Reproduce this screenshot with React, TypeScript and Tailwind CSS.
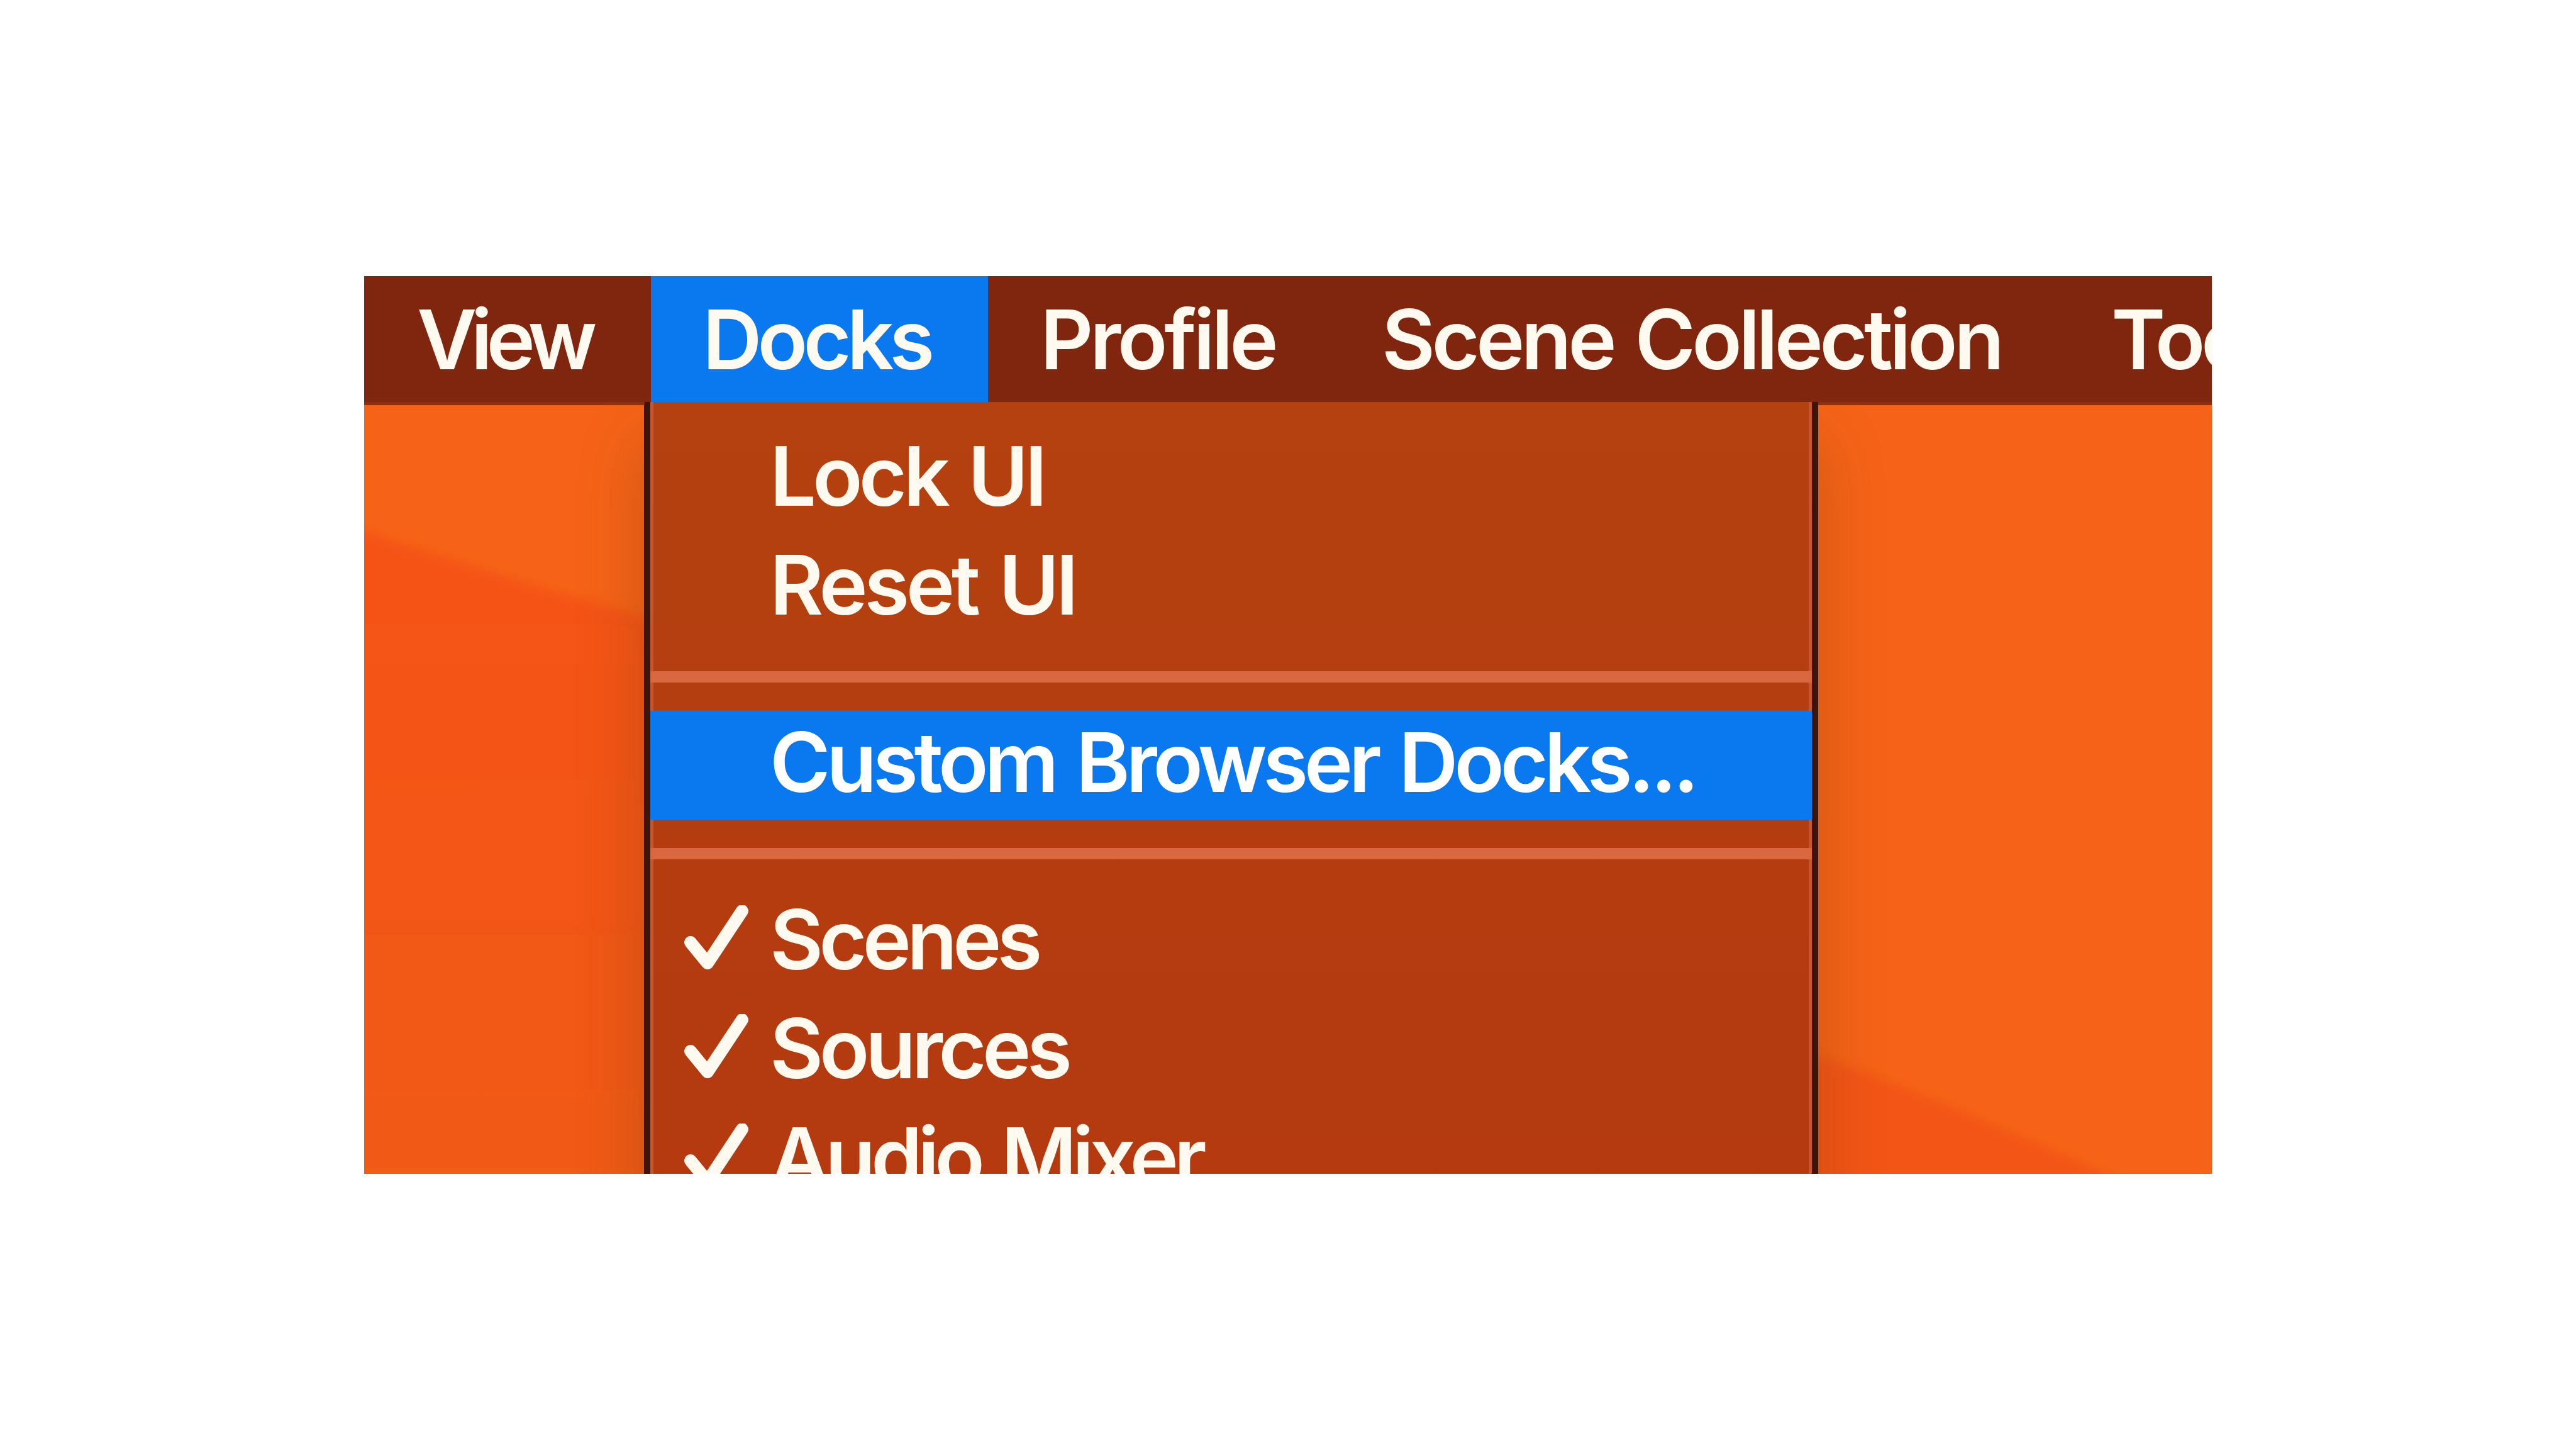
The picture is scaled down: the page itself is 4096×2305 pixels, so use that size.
import React from 'react';

interface BarItem {
    label: string;
    className: string;
    textClassName: string;
}

interface DockItem {
    label: string;
    checked?: boolean;
    highlighted?: boolean;
    tracking: string;
}

const barItems: BarItem[] = [
    { label: 'View', className: 'w-[456px] pl-[84px]', textClassName: 'tracking-[-9.5px]' },
    { label: 'Docks', className: 'w-[536px] pl-[82px] h-[200px] bg-[#0a78ef]', textClassName: 'tracking-[-7px]' },
    { label: 'Profile', className: 'w-[540px] pl-[83px]', textClassName: 'tracking-[-5.4px]' },
    { label: 'Scene Collection', className: 'w-[1157px] pl-[86px]', textClassName: 'tracking-[-5.7px]' },
    { label: 'Tools', className: 'pl-[89px]', textClassName: 'tracking-[-6.5px]' },
];

const layoutItems: DockItem[] = [
    { label: 'Lock UI', tracking: 'tracking-[-6px]' },
    { label: 'Reset UI', tracking: 'tracking-[-5.5px]' },
];

const dockItems: DockItem[] = [
    { label: 'Scenes', checked: true, tracking: 'tracking-[-7px]' },
    { label: 'Sources', checked: true, tracking: 'tracking-[-6.5px]' },
    { label: 'Audio Mixer', checked: true, tracking: 'tracking-[-7.3px]' },
];

const Wallpaper: React.FC = () => (
    <svg className="absolute inset-0 h-full w-full" viewBox="0 0 2938 1427" preserveAspectRatio="none">
        <defs>
            <linearGradient id="leftHill" x1="0" y1="0" x2="0" y2="1">
                <stop offset="0" stopColor="#f55213" />
                <stop offset="1" stopColor="#f15b18" />
            </linearGradient>
            <filter id="soften" x="-10%" y="-10%" width="120%" height="120%">
                <feGaussianBlur stdDeviation="9" />
            </filter>
        </defs>
        <rect width="2938" height="1427" fill="#f66318" />
        <path d="M-60 390 L0 405 Q220 480 460 545 V1500 H-60 Z" fill="url(#leftHill)" filter="url(#soften)" />
        <path d="M2280 1228 Q2440 1283 2580 1345 Q2680 1388 2800 1440 V1500 H2280 Z" fill="#f35414" filter="url(#soften)" />
    </svg>
);

const CheckMark: React.FC = () => (
    <svg className="h-[108px] w-[104px]" viewBox="0 0 104 108" fill="none" stroke="#fffaf0" strokeWidth="20" strokeLinecap="round" strokeLinejoin="round">
        <path d="M11 59 L38 92 L93 9" />
    </svg>
);

const MenuRow: React.FC<{ item: DockItem }> = ({ item }) => (
    <div className={`flex h-[173.3px] items-center pb-[9px] ${item.highlighted ? 'bg-[#0a78ef] text-white' : 'text-[#fffaf0]'}`}>
        <div className="flex w-[190px] shrink-0 pl-[53px]">{item.checked && <CheckMark />}</div>
        <span className={`whitespace-nowrap ${item.tracking}`}>{item.label}</span>
    </div>
);

const Separator: React.FC = () => <div className="h-[18px] bg-[#d9673f]" />;

const App: React.FC = () => {
    return (
        <div className="h-[2305px] w-[4096px] overflow-hidden bg-white pl-[579px] pt-[439px] font-['Inter',sans-serif] text-[131px] leading-none font-[580] [word-spacing:7px]">
            <div className="relative h-[1427px] w-[2938px] overflow-hidden">
                <Wallpaper />

                <div className="absolute top-[200px] left-[445px] h-[1300px] w-[1867px] border-x-[10px] border-[#3d1509] bg-[#b43c0f] shadow-[0_60px_100px_rgba(70,50,10,0.24)]">
                    <div className="h-full border-x-[5px] border-[#c4572f] bg-linear-to-b from-[#b4410f] to-[#b4390f]">
                        <div className="-mx-[5px] flex flex-col pt-[35px]">
                            {layoutItems.map((item) => <MenuRow key={item.label} item={item} />)}
                            <div className="pt-[46px] pb-[45px]"><Separator /></div>
                            <MenuRow item={{ label: 'Custom Browser Docks...', highlighted: true, tracking: 'tracking-[-6.4px]' }} />
                            <div className="pt-[45px] pb-[45px]"><Separator /></div>
                            {dockItems.map((item) => <MenuRow key={item.label} item={item} />)}
                        </div>
                    </div>
                </div>

                <div className="relative flex h-[200px] bg-[#80260f] text-[#fffaf0]">
                    {barItems.map((item) => (
                        <div key={item.label} className={`flex shrink-0 items-center whitespace-nowrap ${item.className}`}>
                            <span className={item.textClassName}>{item.label}</span>
                        </div>
                    ))}
                </div>
                <div className="relative flex h-[5px] justify-between">
                    <div className="w-[446px] bg-[#8a2f10]" />
                    <div className="w-[626px] bg-[#8a2f10]" />
                </div>
            </div>
        </div>
    );
};

export default App;
